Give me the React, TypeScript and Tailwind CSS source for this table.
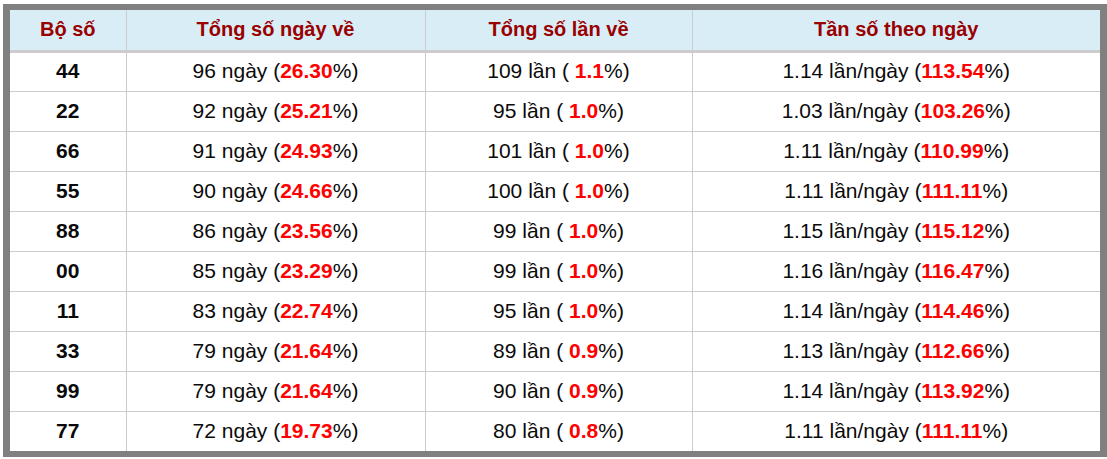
const rows: [string, string, string, string, string, string, string][] = [
  ["44", "96", "26.30", "109", "1.1", "1.14", "113.54"],
  ["22", "92", "25.21", "95", "1.0", "1.03", "103.26"],
  ["66", "91", "24.93", "101", "1.0", "1.11", "110.99"],
  ["55", "90", "24.66", "100", "1.0", "1.11", "111.11"],
  ["88", "86", "23.56", "99", "1.0", "1.15", "115.12"],
  ["00", "85", "23.29", "99", "1.0", "1.16", "116.47"],
  ["11", "83", "22.74", "95", "1.0", "1.14", "114.46"],
  ["33", "79", "21.64", "89", "0.9", "1.13", "112.66"],
  ["99", "79", "21.64", "90", "0.9", "1.14", "113.92"],
  ["77", "72", "19.73", "80", "0.8", "1.11", "111.11"],
];

const Red = ({ children }: { children: React.ReactNode }) => (
  <span className="font-bold text-[#ff0000]">{children}</span>
);

export default function App() {
  return (
    <div className="bg-white pl-[3px] pt-[4px] w-[1107px] h-[459px] font-['Liberation_Sans',Arial,sans-serif]">
      <div className="border-[#808080] border-x-[7px] border-y-[6px] w-[1104px]">
        <table className="w-full border-collapse table-fixed text-[21px] leading-none text-[#0a0a0a]">
          <colgroup>
            <col className="w-[116px]" />
            <col className="w-[299px]" />
            <col className="w-[267px]" />
            <col />
          </colgroup>
          <thead>
            <tr className="bg-[#d9edf7] h-[41px] border-b-[3px] border-[#cccccc] text-[20px]">
              <th className="pb-[2px] font-bold text-[#990000] text-center">Bộ số</th>
              <th className="pb-[2px] font-bold text-[#990000] text-center border-l border-[#cccccc]">Tổng số ngày về</th>
              <th className="pb-[2px] font-bold text-[#990000] text-center border-l border-[#cccccc]">Tổng số lần về</th>
              <th className="pb-[2px] font-bold text-[#990000] text-center border-l border-[#cccccc]">Tần số theo ngày</th>
            </tr>
          </thead>
          <tbody>
            {rows.map((r, i) => (
              <tr key={r[0]} className={`h-[40px] ${i < rows.length - 1 ? "border-b border-[#cccccc]" : ""}`}>
                <td className="pb-[2px] text-center font-bold">{r[0]}</td>
                <td className="pb-[2px] text-center border-l border-[#cccccc]">
                  {r[1]} ngày (<Red>{r[2]}</Red>%)
                </td>
                <td className="pb-[2px] text-center border-l border-[#cccccc]">
                  {r[3]} lần ( <Red>{r[4]}</Red>%)
                </td>
                <td className="pb-[2px] text-center border-l border-[#cccccc]">
                  {r[5]} lần/ngày (<Red>{r[6]}</Red>%)
                </td>
              </tr>
            ))}
          </tbody>
        </table>
      </div>
    </div>
  );
}
